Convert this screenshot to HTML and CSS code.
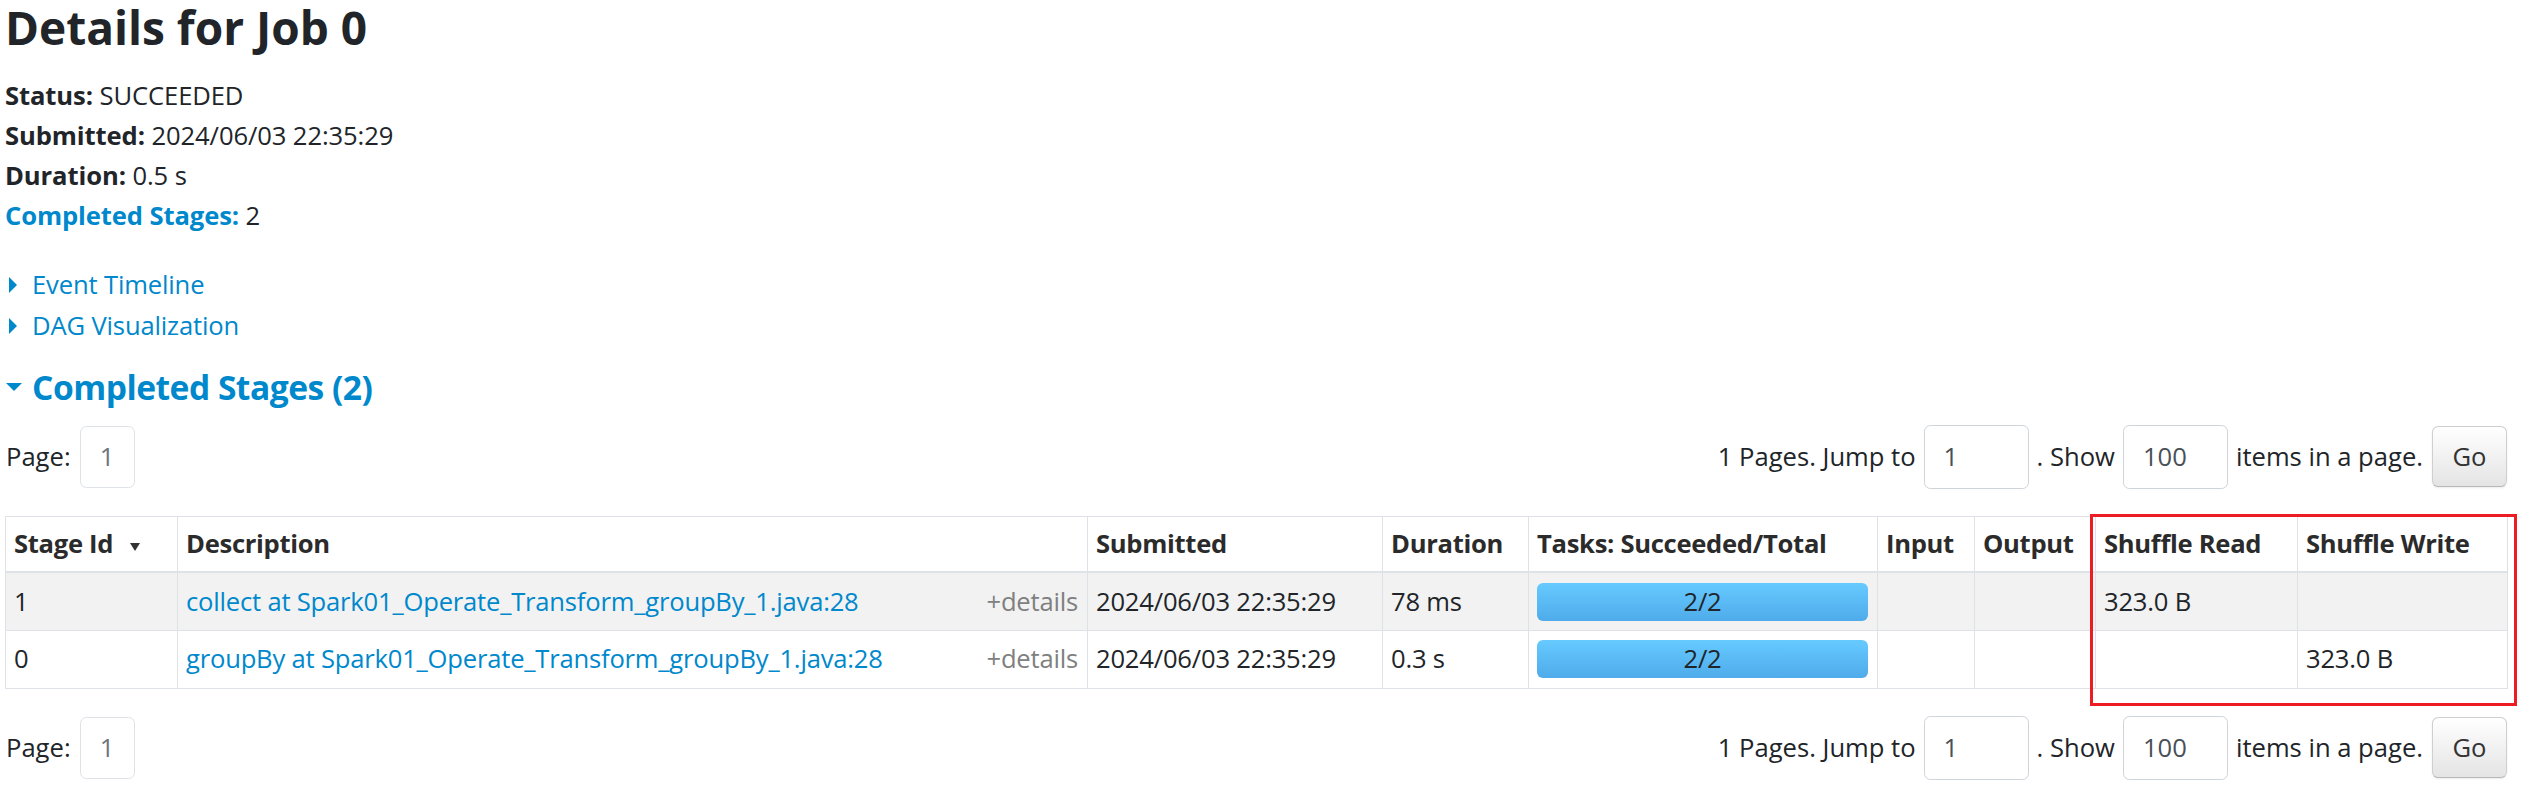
FILE: index.html
```html
<!DOCTYPE html>
<html lang="en">
<head>
<meta charset="utf-8">
<title>Details for Job 0</title>
<link rel="stylesheet" href="styles.css">
</head>
<body>
<div class="container">
  <h3 class="title">Details for Job 0</h3>
  <ul class="summary">
    <li><strong>Status:</strong> SUCCEEDED</li>
    <li><strong>Submitted:</strong> 2024/06/03 22:35:29</li>
    <li><strong>Duration:</strong> 0.5 s</li>
    <li><a class="link" href="#completed"><strong>Completed Stages:</strong></a> 2</li>
  </ul>

  <div class="expander"><span class="arrow-closed"></span><a class="link" href="#">Event Timeline</a></div>
  <div class="expander"><span class="arrow-closed"></span><a class="link" href="#">DAG Visualization</a></div>

  <h4 class="section" id="completed"><span class="arrow-open"></span><a class="link" href="#">Completed Stages (2)</a></h4>

  <div class="pager">
    <div class="pager-left">Page: <span class="page-box">1</span></div>
    <div class="pager-right">
      <span>1 Pages. Jump to</span>
      <input class="field" type="text" value="1">
      <span>. Show</span>
      <input class="field" type="text" value="100">
      <span>items in a page.</span>
      <button class="go" type="button">Go</button>
    </div>
  </div>

  <div class="table-wrap">
    <table class="stages">
      <colgroup>
        <col class="c-id"><col class="c-desc"><col class="c-sub"><col class="c-dur"><col class="c-tasks"><col class="c-in"><col class="c-out"><col class="c-sr"><col class="c-sw">
      </colgroup>
      <thead>
        <tr>
          <th>Stage Id <svg class="sort" width="10" height="8" viewBox="0 0 10 8"><path d="M0 0H10L5 8Z" fill="#333"/></svg></th>
          <th>Description</th>
          <th>Submitted</th>
          <th>Duration</th>
          <th>Tasks: Succeeded/Total</th>
          <th>Input</th>
          <th>Output</th>
          <th>Shuffle Read</th>
          <th>Shuffle Write</th>
        </tr>
      </thead>
      <tbody>
        <tr class="odd">
          <td>1</td>
          <td><span class="details">+details</span><a class="link" href="#">collect at Spark01_Operate_Transform_groupBy_1.java:28</a></td>
          <td>2024/06/03 22:35:29</td>
          <td>78 ms</td>
          <td><div class="progress"><span class="progress-label">2/2</span></div></td>
          <td></td>
          <td></td>
          <td>323.0 B</td>
          <td></td>
        </tr>
        <tr>
          <td>0</td>
          <td><span class="details">+details</span><a class="link" href="#">groupBy at Spark01_Operate_Transform_groupBy_1.java:28</a></td>
          <td>2024/06/03 22:35:29</td>
          <td>0.3 s</td>
          <td><div class="progress"><span class="progress-label">2/2</span></div></td>
          <td></td>
          <td></td>
          <td></td>
          <td>323.0 B</td>
        </tr>
      </tbody>
    </table>
    <div class="highlight"></div>
  </div>

  <div class="pager pager-bottom">
    <div class="pager-left">Page: <span class="page-box">1</span></div>
    <div class="pager-right">
      <span>1 Pages. Jump to</span>
      <input class="field" type="text" value="1">
      <span>. Show</span>
      <input class="field" type="text" value="100">
      <span>items in a page.</span>
      <button class="go" type="button">Go</button>
    </div>
  </div>
</div>
</body>
</html>
```

FILE: styles.css
```css
* { box-sizing: border-box; }

html, body {
  margin: 0;
  padding: 0;
  background: #ffffff;
}

body {
  font-family: "Open Sans", "Noto Sans", sans-serif;
  font-size: 25.6px;
  line-height: 38.4px;
  color: #212529;
}

.container {
  padding: 0 18px 0 5px;
}

.link {
  color: #0088cc;
  text-decoration: none;
}

.title {
  margin: 0;
  font-size: 46px;
  line-height: 54px;
  font-weight: 700;
  letter-spacing: 0;
}

.summary {
  list-style: none;
  margin: 22px 0 0 0;
  padding: 0;
  line-height: 40px;
  letter-spacing: -0.1px;
}

.summary strong { font-weight: 700; }

.expander {
  display: flex;
  align-items: center;
  height: 41px;
  line-height: 41px;
  letter-spacing: -0.15px;
}
.summary + .expander { margin-top: 28px; }

.arrow-closed {
  width: 0;
  height: 0;
  margin-left: 4px;
  margin-right: 15px;
  border-top: 8px solid transparent;
  border-bottom: 8px solid transparent;
  border-left: 8px solid #0088cc;
}

.section {
  display: flex;
  align-items: center;
  margin: 21px 0 0 0;
  font-size: 33.6px;
  line-height: 40.8px;
  font-weight: 700;
  letter-spacing: -0.5px;
}

.arrow-open {
  width: 0;
  height: 0;
  margin-left: 1px;
  margin-right: 10px;
  border-left: 8.5px solid transparent;
  border-right: 8.5px solid transparent;
  border-top: 8px solid #0088cc;
}

.pager {
  display: flex;
  justify-content: space-between;
  align-items: center;
  height: 64px;
  margin-top: 17px;
}
.pager-bottom { margin-top: 27px; }

.pager-left {
  display: flex;
  align-items: center;
  gap: 9px;
  padding-left: 1px;
}

.page-box {
  display: flex;
  align-items: center;
  justify-content: center;
  width: 55px;
  height: 62px;
  border: 1px solid #dee2e6;
  border-radius: 6.4px;
  color: #6c757d;
  background: #fff;
}

.pager-right {
  display: flex;
  align-items: center;
  gap: 8px;
}

.field {
  width: 105px;
  height: 64px;
  padding: 0 19px;
  border: 1px solid #ced4da;
  border-radius: 6.4px;
  font-family: inherit;
  font-size: 25.6px;
  color: #495057;
  background: #fff;
}

.go {
  width: 75px;
  height: 61px;
  margin-left: 1px;
  padding: 0;
  border: 1px solid #cfcfcf;
  border-bottom-color: #b8b8b8;
  border-radius: 6.4px;
  background: linear-gradient(to bottom, #ffffff 0%, #e4e4e4 100%);
  box-shadow: 0 1px 2px rgba(0,0,0,0.08);
  font-family: inherit;
  font-size: 25.6px;
  color: #333;
}

.table-wrap {
  position: relative;
  margin-top: 27px;
}

.stages {
  width: 100%;
  table-layout: fixed;
  border-collapse: collapse;
  border: 1px solid #dee2e6;
  letter-spacing: -0.2px;
}

.c-id { width: 172px; }
.c-desc { width: 910px; }
.c-sub { width: 295px; }
.c-dur { width: 146px; }
.c-tasks { width: 349px; }
.c-in { width: 97px; }
.c-out { width: 121px; }
.c-sr { width: 202px; }
.c-sw { width: 210px; }

.stages th,
.stages td {
  border: 1px solid #dee2e6;
  text-align: left;
  vertical-align: middle;
  white-space: nowrap;
  overflow: hidden;
}

.stages th {
  height: 56px;
  padding: 0 9px 0 8px;
  line-height: 38px;
  font-weight: 700;
  color: #2b2b2b;
  letter-spacing: -0.3px;
  border-bottom: 2px solid #dee2e6;
}

.stages td {
  height: 58px;
  padding: 0 9px 0 8px;
  line-height: 38px;
}

.stages tr.odd td { background: #f2f2f2; }

.sort {
  margin-left: 10px;
  vertical-align: 2px;
}

.details {
  float: right;
  color: #808080;
}

.progress {
  display: flex;
  align-items: center;
  justify-content: center;
  height: 38px;
  border-radius: 6px;
  background: linear-gradient(to bottom, #66caff 0%, #4fabea 100%);
}

.progress-label {
  color: #212529;
}

.highlight {
  position: absolute;
  left: 2085px;
  top: -2px;
  width: 427px;
  height: 192px;
  border: 3px solid #ed1c24;
  pointer-events: none;
}
```
